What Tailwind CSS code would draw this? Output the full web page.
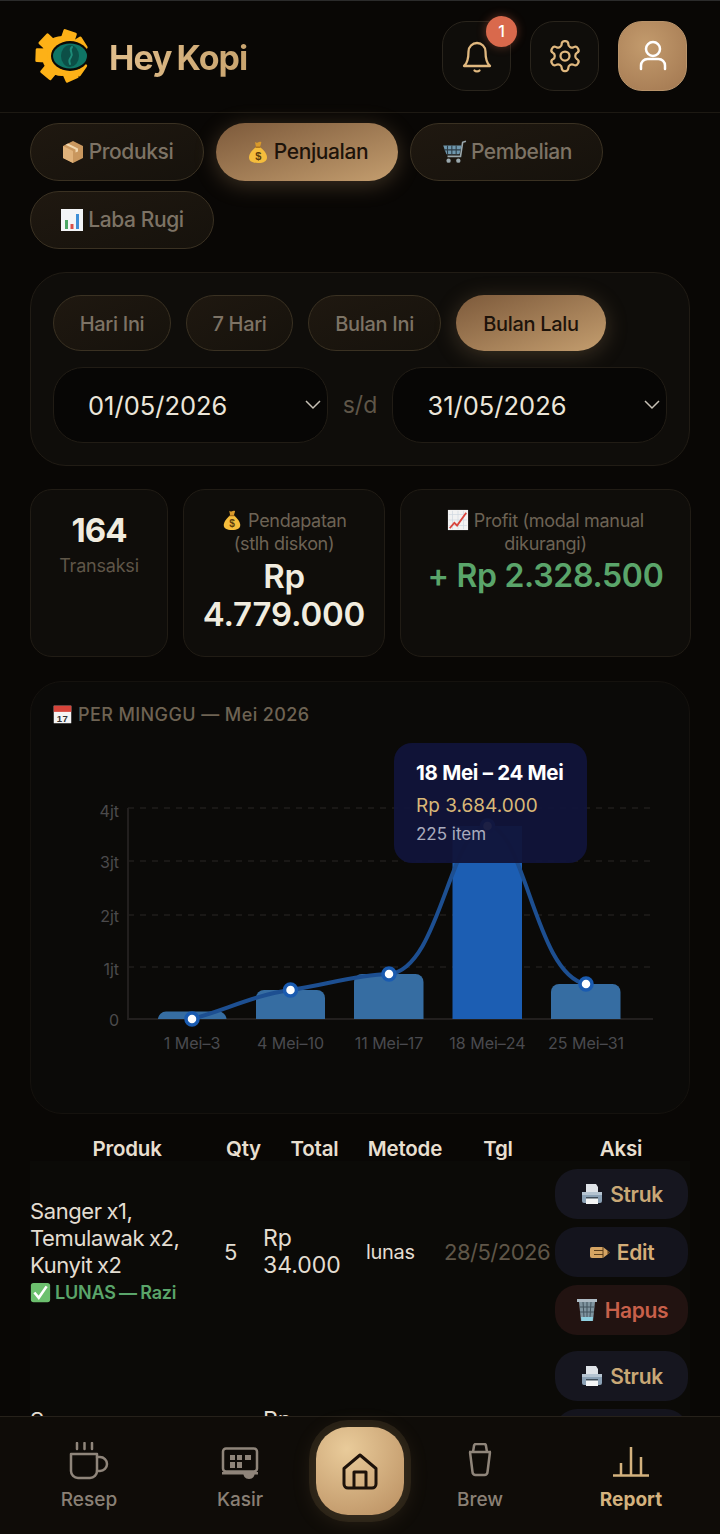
<!DOCTYPE html>
<html lang="en">
<head>
    <meta charset="UTF-8">
    <meta name="viewport" content="width=device-width, initial-scale=1.0">
    <title>Hey Kopi - Report</title>
    <script src="https://cdn.jsdelivr.net/npm/@tailwindcss/browser@4"></script>
</head>
<body class="bg-[#090705]">
    <svg class="hidden">
        <symbol id="bag" viewBox="0 0 24 24">
            <path d="M9 2c1 1 2 1 3 .4 1-.6 2.600-.8 3.400 0L14 7h-4z" fill="#d99a2b"/>
            <path d="M10 7h4c4 3 7 7 7 10.500C21 21 18 23 12 23S3 21 3 17.500C3 14 6 10 10 7z" fill="#f5bd3c"/>
            <path d="M9.500 6.500h5v1.400h-5z" fill="#a86f1c"/>
            <text x="12" y="20" text-anchor="middle" font-size="11" font-weight="700" fill="#5b3c0c" font-family="Liberation Sans, sans-serif">$</text>
        </symbol>
        <symbol id="printer" viewBox="0 0 24 24">
            <path d="M6 2h10l2 3v5H6z" fill="#dfe3e8"/>
            <path d="M2 10h20v9a2 2 0 0 1-2 2H4a2 2 0 0 1-2-2z" fill="#8ba1b5"/>
            <path d="M2 10h20v3H2z" fill="#b5c4d1"/>
            <path d="M6 16h12v6H6z" fill="#f4f5f6"/>
            <path d="M6 15h12v1.500H6z" fill="#3e4c59"/>
        </symbol>
    </svg>

    <div class="relative w-[720px] h-[1534px] overflow-hidden font-['Inter',sans-serif] border-t border-[#2b2b2b]">

        <div class="h-[1415px] overflow-hidden">
        <!-- header -->
        <header class="flex items-center justify-between h-[112px] pb-[2px] pl-[35px] pr-[33px] border-b border-[#1d1913] bg-[#090705]">
            <div class="flex items-center gap-[21px]">
                <svg class="w-[53px] h-[56px] overflow-visible" viewBox="0 0 53 56">
                    <g fill="#fdb117">
                        <circle cx="27" cy="28" r="20"/>
                        <rect x="20" y="1.500" width="14" height="12" rx="1.500" transform="rotate(19 27 28)"/>
                        <rect x="20" y="1.500" width="14" height="12" rx="1.500" transform="rotate(-47 27 28)"/>
                        <rect x="20" y="1.500" width="14" height="12" rx="1.500" transform="rotate(-88 27 28)"/>
                        <rect x="20" y="1.500" width="14" height="12" rx="1.500" transform="rotate(-140 27 28)"/>
                        <rect x="20" y="1.500" width="14" height="12" rx="1.500" transform="rotate(156 27 28)"/>
                        <rect x="20" y="1.500" width="14" height="12" rx="1.500" transform="rotate(125 27 28)"/>
                        <rect x="20" y="1.500" width="14" height="12" rx="1.500" transform="rotate(58 27 28)"/>
                    </g>
                    <ellipse cx="35" cy="28" rx="19" ry="15" fill="#0b0a07"/>
                    <ellipse cx="35" cy="28" rx="17" ry="12.500" fill="#0f7565"/>
                    <ellipse cx="35" cy="28" rx="9" ry="11" fill="#0c4f47"/>
                    <path d="M37 19c-4 4 2 6-1 10-2 3-2 4-1 7" fill="none" stroke="#1d8b78" stroke-width="2" stroke-linecap="round"/>
                </svg>
                <h1 class="pt-[3px] text-[34px] font-bold tracking-[-1px] [word-spacing:-2px] bg-gradient-to-r from-[#e0bd8b] to-[#c9a46f] bg-clip-text text-transparent">Hey Kopi</h1>
            </div>
            <div class="flex items-center gap-[19px]">
                <button class="relative flex items-center justify-center w-[69px] h-[70px] rounded-[24px] bg-[#0f0d0a] border border-[#29241c]">
                    <svg class="w-[36px] h-[36px]" viewBox="0 0 36 36" fill="none" stroke="#e0b87f" stroke-width="2.300" stroke-linecap="round" stroke-linejoin="round">
                        <path d="M9.500 13.500a8.500 8.500 0 0 1 17 0c0 9 2 12.500 4.500 14.500H5c2.500-2 4.500-5.500 4.500-14.500z"/>
                        <path d="M15.500 32.500c1.200 1.200 3.800 1.200 5 0"/>
                    </svg>
                    <span class="absolute -top-[6px] -right-[7px] flex items-center justify-center w-[31px] h-[31px] rounded-full bg-[#d9694c] text-white text-[16px] font-medium shadow-[0_0_10px_rgba(217,105,76,.4)]">1</span>
                </button>
                <button class="flex items-center justify-center w-[69px] h-[70px] rounded-[24px] bg-[#0f0d0a] border border-[#29241c]">
                    <svg class="w-[36px] h-[36px]" viewBox="0 0 24 24" fill="none" stroke="#e0b87f" stroke-width="1.500" stroke-linecap="round" stroke-linejoin="round">
                        <path d="M12.220 2h-.44a2 2 0 0 0-2 2v.18a2 2 0 0 1-1 1.730l-.43.25a2 2 0 0 1-2 0l-.15-.08a2 2 0 0 0-2.730.73l-.22.38a2 2 0 0 0 .73 2.730l.15.1a2 2 0 0 1 1 1.720v.51a2 2 0 0 1-1 1.740l-.15.09a2 2 0 0 0-.73 2.730l.22.38a2 2 0 0 0 2.730.73l.15-.08a2 2 0 0 1 2 0l.43.25a2 2 0 0 1 1 1.730V20a2 2 0 0 0 2 2h.44a2 2 0 0 0 2-2v-.18a2 2 0 0 1 1-1.730l.43-.25a2 2 0 0 1 2 0l.15.08a2 2 0 0 0 2.730-.73l.22-.39a2 2 0 0 0-.73-2.730l-.15-.08a2 2 0 0 1-1-1.740v-.5a2 2 0 0 1 1-1.740l.15-.09a2 2 0 0 0 .73-2.730l-.22-.38a2 2 0 0 0-2.730-.73l-.15.08a2 2 0 0 1-2 0l-.43-.25a2 2 0 0 1-1-1.730V4a2 2 0 0 0-2-2z"/>
                        <circle cx="12" cy="12" r="3"/>
                    </svg>
                </button>
                <button class="flex items-center justify-center w-[69px] h-[70px] rounded-[24px] bg-[radial-gradient(circle_at_40%_35%,#c39b6d,#a27750)] border border-[#b8936a]">
                    <svg class="w-[36px] h-[36px]" viewBox="0 0 36 36" fill="none" stroke="#fff" stroke-width="2.500" stroke-linecap="round">
                        <circle cx="18" cy="11" r="7"/>
                        <path d="M6 31v-3.500a6.500 6.500 0 0 1 6.500-6.500h11a6.500 6.500 0 0 1 6.500 6.500V31"/>
                    </svg>
                </button>
            </div>
        </header>

        <main class="px-[30px]">
            <!-- section tabs -->
            <nav class="flex flex-wrap gap-x-[12px] gap-y-[10px] pt-[10px] text-[21px] font-medium tracking-[-0.400px] [word-spacing:-1px]">
                <button class="flex items-center justify-center gap-[4px] w-[174px] h-[58px] rounded-full bg-gradient-to-br from-[#1f1810] to-[#16120c] border border-[#3a3122] text-[#7d7365]">
                    <svg class="w-[24px] h-[24px]" viewBox="0 0 24 24"><path d="M12 1l10 5v12l-10 5-10-5V6z" fill="#c9975e"/><path d="M12 11v12l-10-5V6z" fill="#e0b27a"/><path d="M7 3.500l10 5v3l-2.500 1v-3L4.500 4.800z" fill="#f0d6ad"/></svg>
                    Produksi
                </button>
                <button class="flex items-center justify-center gap-[4px] w-[182px] h-[58px] rounded-full bg-gradient-to-br from-[#7d5a3b] to-[#c49e6f] text-[#1d130a] shadow-[0_4px_22px_rgba(196,158,111,.28)]">
                    <svg class="w-[24px] h-[24px]"><use href="#bag"/></svg>
                    Penjualan
                </button>
                <button class="flex items-center justify-center gap-[4px] w-[193px] h-[58px] rounded-full bg-gradient-to-br from-[#1f1810] to-[#16120c] border border-[#3a3122] text-[#7d7365]">
                    <svg class="w-[26px] h-[26px]" viewBox="0 0 24 24"><path d="M23 2l-3 1-2 13H6" fill="none" stroke="#9aa8ad" stroke-width="1.500"/><path d="M2 6h17l-2 8H5z" fill="#6f97ad"/><path d="M6 6v8M10 6v8M14 6v8M3 10h15" stroke="#2c3d47"/><circle cx="7" cy="20" r="2" fill="#9aa8ad"/><circle cx="16" cy="20" r="2" fill="#9aa8ad"/></svg>
                    Pembelian
                </button>
                <button class="flex items-center justify-center gap-[4px] w-[184px] h-[58px] rounded-full bg-gradient-to-br from-[#1f1810] to-[#16120c] border border-[#3a3122] text-[#7d7365]">
                    <svg class="w-[24px] h-[24px]" viewBox="0 0 24 24"><path d="M1 1h22v22H1z" fill="#f3f5f7"/><path d="M5 12h3v9H5z" fill="#4aa564"/><path d="M10.500 16h3v5h-3z" fill="#d9504a"/><path d="M16 6h3v15h-3z" fill="#3f8fd6"/></svg>
                    Laba Rugi
                </button>
            </nav>

            <!-- filter card -->
            <section class="mt-[23px] h-[194px] px-[22px] pt-[22px] rounded-[36px] bg-[#0f0d0a] border border-[#211c15]">
                <div class="flex gap-[15px] text-[20px] font-medium tracking-[-0.300px] [word-spacing:-1px]">
                    <button class="w-[118px] h-[56px] pt-[1px] rounded-full bg-gradient-to-br from-[#1f1810] to-[#16120c] border border-[#3a3122] text-[#7d7365]">Hari Ini</button>
                    <button class="w-[107px] h-[56px] pt-[1px] rounded-full bg-gradient-to-br from-[#1f1810] to-[#16120c] border border-[#3a3122] text-[#7d7365]">7 Hari</button>
                    <button class="w-[133px] h-[56px] pt-[1px] rounded-full bg-gradient-to-br from-[#1f1810] to-[#16120c] border border-[#3a3122] text-[#7d7365]">Bulan Ini</button>
                    <button class="w-[150px] h-[56px] pt-[1px] rounded-full bg-gradient-to-br from-[#7d5a3b] to-[#c49e6f] text-[#1d130a] shadow-[0_4px_22px_rgba(196,158,111,.25)]">Bulan Lalu</button>
                </div>
                <div class="flex items-center mt-[16px]">
                    <div class="flex items-center justify-between w-[275px] h-[76px] pl-[34px] pr-[6px] rounded-[30px] bg-[#070605] border border-[#211c15] text-[25.500px] text-[#ebe5d9]">
                        <span class="pt-[2px]">01/05/2026</span>
                        <svg class="w-[16px] h-[10px]" viewBox="0 0 16 10" fill="none" stroke="#c7c1b6" stroke-width="1.500"><path d="M1 1l7 7 7-7"/></svg>
                    </div>
                    <span class="w-[65px] text-center text-[23px] text-[#5f5648]">s/d</span>
                    <div class="flex items-center justify-between w-[275px] h-[76px] pl-[34px] pr-[6px] rounded-[30px] bg-[#070605] border border-[#211c15] text-[25.500px] text-[#ebe5d9]">
                        <span class="pt-[2px]">31/05/2026</span>
                        <svg class="w-[16px] h-[10px]" viewBox="0 0 16 10" fill="none" stroke="#c7c1b6" stroke-width="1.500"><path d="M1 1l7 7 7-7"/></svg>
                    </div>
                </div>
            </section>

            <!-- stats -->
            <section class="grid grid-cols-[138px_202px_291px] gap-x-[15px] mt-[23px] h-[168px] text-center">
                <div class="pt-[20px] rounded-[22px] bg-[#0f0d0a] border border-[#211c15]">
                    <div class="text-[33px] leading-[40px] font-bold text-[#f1ecdf] tracking-[-1px]">164</div>
                    <div class="mt-[4px] text-[18px] leading-[24px] text-[#5f5648] tracking-[-0.200px]">Transaksi</div>
                </div>
                <div class="pt-[19px] rounded-[22px] bg-[#0f0d0a] border border-[#211c15]">
                    <div class="text-[18px] leading-[23px] text-[#6d6355] tracking-[-0.300px]">
                        <svg class="inline-block w-[22px] h-[22px] align-[-4px]"><use href="#bag"/></svg> Pendapatan<br>(stlh diskon)
                    </div>
                    <div class="mt-[2px] text-[33px] leading-[38px] font-semibold text-[#f1ecdf] tracking-[-0.200px]">Rp<br>4.779.000</div>
                </div>
                <div class="pt-[19px] rounded-[22px] bg-[#0f0d0a] border border-[#211c15]">
                    <div class="px-[20px] text-[18px] leading-[23px] text-[#6d6355] tracking-[-0.300px]">
                        <svg class="inline-block w-[22px] h-[22px] align-[-4px]" viewBox="0 0 24 24"><path d="M1 1h22v22H1z" fill="#f2f2f2"/><path d="M2 6h20M2 12h20M2 18h20M6 2v20M12 2v20M18 2v20" stroke="#cdd6e0" stroke-width=".7"/><path d="M3 21l5-6 3 3L21 4" fill="none" stroke="#d9443c" stroke-width="2"/></svg> Profit (modal manual dikurangi)
                    </div>
                    <div class="mt-[2px] text-[32px] leading-[38px] font-semibold text-[#5aa56a] tracking-[-0.300px]">+ Rp 2.328.500</div>
                </div>
            </section>

            <!-- weekly chart -->
            <section class="relative mt-[24px] h-[433px] rounded-[32px] bg-[#0b0a08] border border-[#15120e]">
                <h2 class="absolute left-[21px] top-[19px] flex items-center gap-[5px] text-[18px] font-medium tracking-[0.400px] text-[#6e6353]">
                    <svg class="w-[21px] h-[21px]" viewBox="0 0 24 24"><path d="M2 2h20v20H2z" fill="#f4f4f4"/><path d="M2 2h20v7H2z" fill="#d8443a"/><text x="12" y="20" text-anchor="middle" font-size="11" font-weight="700" fill="#333" font-family="Liberation Sans, sans-serif">17</text></svg>
                    PER MINGGU — Mei 2026
                </h2>
                <svg class="absolute left-[-1px] top-[-1px]" width="660" height="432" viewBox="30 681 660 432" font-family="Inter, sans-serif">
                    <g stroke="#2a2725" stroke-dasharray="6 6">
                        <path d="M128 808H653M128 861H653M128 915H653M128 967H653"/>
                    </g>
                    <path d="M128 808V1019H653" fill="none" stroke="#221f1e" stroke-width="2"/>
                    <g font-size="16" fill="#4b4a4c" text-anchor="end">
                        <text x="119" y="817">4jt</text>
                        <text x="119" y="868">3jt</text>
                        <text x="119" y="922">2jt</text>
                        <text x="119" y="975">1jt</text>
                        <text x="119" y="1026">0</text>
                    </g>
                    <path d="M158 1019a8 8 0 0 1 8-7.500h52.500a8 8 0 0 1 8 7.500z" fill="#366da2"/>
                    <path d="M256 1019v-21a8 8 0 0 1 8-8h53a8 8 0 0 1 8 8v21z" fill="#366da2"/>
                    <path d="M354 1019v-37a8 8 0 0 1 8-8h53.500a8 8 0 0 1 8 8v37z" fill="#366da2"/>
                    <path d="M452.500 1019V826H522V1019z" fill="#1c5eb3"/>
                    <path d="M551 1019v-27a8 8 0 0 1 8-8h53.500a8 8 0 0 1 8 8v27z" fill="#366da2"/>
                    <path d="M192 1019C225 1010 255 995 290.500 990 325 985 355 975 389 974 440 970 450 826 487.500 826 525 826 535 975 586 984" fill="none" stroke="#1d4f91" stroke-width="4"/>
                    <g fill="#fff" stroke="#1a5bb0" stroke-width="3.500">
                        <circle cx="192" cy="1019" r="6"/>
                        <circle cx="290.500" cy="990" r="6"/>
                        <circle cx="389" cy="974" r="6"/>
                        <circle cx="487.500" cy="826" r="6"/>
                        <circle cx="586" cy="984" r="6"/>
                    </g>
                    <g font-size="16" fill="#4a4a4f" text-anchor="middle">
                        <text x="192" y="1049">1 Mei–3</text>
                        <text x="290.500" y="1049">4 Mei–10</text>
                        <text x="389" y="1049">11 Mei–17</text>
                        <text x="487.500" y="1049">18 Mei–24</text>
                        <text x="586" y="1049">25 Mei–31</text>
                    </g>
                </svg>
                <!-- tooltip over the active bar -->
                <div class="absolute left-[363px] top-[61px] w-[193px] h-[120px] pl-[22px] pt-[17px] rounded-[18px] bg-[#11143a]/95">
                    <div class="text-[20.500px] leading-[26px] font-bold text-white tracking-[-0.300px]">18 Mei – 24 Mei</div>
                    <div class="mt-[7px] text-[19px] leading-[26px] text-[#d9b878]">Rp 3.684.000</div>
                    <div class="mt-[2px] text-[17px] leading-[26px] text-[#a9abbd]">225 item</div>
                </div>
            </section>

            <!-- sales table -->
            <table class="mt-[22px] w-[660px] table-fixed border-collapse">
                <colgroup>
                    <col class="w-[194px]"><col class="w-[39px]"><col class="w-[103px]"><col class="w-[78px]"><col class="w-[108px]"><col class="w-[138px]">
                </colgroup>
                <thead>
                    <tr class="h-[25px] text-[20.500px] leading-[25px] font-semibold text-[#e8dfd0] tracking-[-0.200px]">
                        <th class="font-semibold">Produk</th>
                        <th class="font-semibold">Qty</th>
                        <th class="font-semibold">Total</th>
                        <th class="font-semibold">Metode</th>
                        <th class="font-semibold">Tgl</th>
                        <th class="font-semibold">Aksi</th>
                    </tr>
                </thead>
                <tbody class="bg-[#0b0a07] text-[22px] leading-[27px] text-[#e3ddd1]">
                    <tr>
                        <td class="align-middle tracking-[-0.400px] [word-spacing:-1px]">
                            Sanger x1, Temulawak x2, Kunyit x2
                            <div class="flex items-center gap-[4px] text-[18px] leading-[28px] font-semibold text-[#5aa56a] tracking-[-0.200px]">
                                <svg class="w-[21px] h-[21px]" viewBox="0 0 24 24"><rect x="1" y="1" width="22" height="22" rx="3" fill="#6cc06e"/><path d="M5 12l5 6 9-13" fill="none" stroke="#fff" stroke-width="3"/></svg>
                                LUNAS — Razi
                            </div>
                        </td>
                        <td class="align-middle">5</td>
                        <td class="align-middle text-[23px]">Rp 34.000</td>
                        <td class="align-middle text-[20px] tracking-[-0.300px]">lunas</td>
                        <td class="align-middle whitespace-nowrap text-[22px] text-[#5f5648] tracking-[-0.500px]">28/5/2026</td>
                        <td class="py-[8px] pl-[3px]">
                            <div class="flex flex-col gap-[8px] w-[133px] text-[21px] font-semibold tracking-[-0.300px]">
                                <button class="flex items-center justify-center gap-[6px] h-[50px] rounded-[22px] bg-[#16161f] text-[#c9a876]">
                                    <svg class="w-[24px] h-[24px]"><use href="#printer"/></svg>Struk
                                </button>
                                <button class="flex items-center justify-center gap-[6px] h-[50px] rounded-[22px] bg-[#14141d] text-[#d4ad78]">
                                    <svg class="w-[22px] h-[13px]" viewBox="0 0 22 13"><path d="M1 3a2 2 0 0 1 2-2h11l7 5.500-7 5.500H3a2 2 0 0 1-2-2z" fill="#d5a463"/><path d="M5 4.500h9M5 8.500h9M14 1v11" stroke="#5a3e1c" stroke-width="1"/><path d="M18.500 4.500l2.500 2-2.500 2z" fill="#5a3e1c"/></svg>Edit
                                </button>
                                <button class="flex items-center justify-center gap-[6px] h-[50px] rounded-[22px] bg-[#221311] text-[#c8604a]">
                                    <svg class="w-[24px] h-[26px]" viewBox="0 0 24 26"><path d="M2 2h20v3H2z" fill="#aebbc4"/><path d="M4 5h16l-2 19H6z" fill="#7f949f"/><path d="M6 20h12l-.5 4h-11z" fill="#8fd0e0"/><path d="M8 5l1 15M12 5v15M16 5l-1 15M5 10h14M5 15h14" stroke="#44555f"/></svg>Hapus
                                </button>
                            </div>
                        </td>
                    </tr>
                    <tr>
                        <td class="align-middle tracking-[-0.400px]">
                            Sanger
                            <div class="flex items-center gap-[4px] text-[18px] leading-[28px] font-semibold text-[#5aa56a] tracking-[-0.200px]">LUNAS — Razi</div>
                        </td>
                        <td class="align-middle">3</td>
                        <td class="align-middle text-[23px]">Rp 21.000</td>
                        <td class="align-middle text-[20px] tracking-[-0.300px]">lunas</td>
                        <td class="align-middle whitespace-nowrap text-[22px] text-[#5f5648] tracking-[-0.500px]">28/5/2026</td>
                        <td class="py-[8px] pl-[3px]">
                            <div class="flex flex-col gap-[8px] w-[133px] text-[21px] font-semibold tracking-[-0.300px]">
                                <button class="flex items-center justify-center gap-[6px] h-[50px] rounded-[22px] bg-[#16161f] text-[#c9a876]">
                                    <svg class="w-[24px] h-[24px]"><use href="#printer"/></svg>Struk
                                </button>
                                <button class="flex items-center justify-center gap-[6px] h-[50px] rounded-[22px] bg-[#14141d] text-[#d4ad78]">Edit</button>
                                <button class="flex items-center justify-center gap-[6px] h-[50px] rounded-[22px] bg-[#221311] text-[#c8604a]">Hapus</button>
                            </div>
                        </td>
                    </tr>
                </tbody>
            </table>
        </main>
        </div>

        <!-- bottom nav sits over the scrolling content -->
        <nav class="absolute left-0 right-0 bottom-0 grid grid-cols-[178px_124px_116px_124px_178px] h-[118px] bg-[#0f0c08] border-t border-[#26211a] text-[19px] font-medium text-[#8a8075]">
            <a class="flex flex-col items-center">
                <svg class="mt-[25px] w-[40px] h-[38px]" viewBox="0 0 40 38" fill="none" stroke="#8f857a" stroke-width="2.500" stroke-linecap="round" stroke-linejoin="round">
                    <path d="M8 1v6M15.500 1v6M23 1v6"/>
                    <path d="M2 12h26v17a7 7 0 0 1-7 7H9a7 7 0 0 1-7-7z"/>
                    <path d="M28 15h3a7 7 0 0 1 0 14h-3"/>
                </svg>
                <span class="mt-[6px]">Resep</span>
            </a>
            <a class="flex flex-col items-center">
                <svg class="mt-[30px] w-[38px] h-[33px]" viewBox="0 0 38 33" fill="#8f857a" stroke="none">
                    <path d="M5 1.500h28a3 3 0 0 1 3 3v17a3 3 0 0 1-3 3H5a3 3 0 0 1-3-3v-17a3 3 0 0 1 3-3z" fill="none" stroke="#8f857a" stroke-width="2.500"/>
                    <path d="M9 8h5v5H9zM16 8h5v5h-5zM24 8h6v5h-6zM9 15h5v6H9zM16 15h5v6h-5z"/>
                    <path d="M1 25h36v2.500H1z"/>
                    <path d="M22 24h12c0 5-2 8-6 8s-6-3-6-8z"/>
                </svg>
                <span class="mt-[6px]">Kasir</span>
            </a>
            <div class="flex justify-center">
                <button class="flex items-center justify-center mt-[10px] w-[88px] h-[88px] rounded-[32px] bg-[radial-gradient(circle_at_35%_25%,#e9cb9a,#b98e60)] shadow-[0_0_0_7px_rgba(120,98,66,.2),0_4px_24px_rgba(200,160,110,.18)]">
                    <svg class="w-[36px] h-[37px]" viewBox="0 0 36 37" fill="none" stroke="#1d120a" stroke-width="3" stroke-linejoin="round">
                        <path d="M2 15.500 18 2l16 13.500V31a4 4 0 0 1-4 4H6a4 4 0 0 1-4-4z"/>
                        <path d="M12 35V19h12v16"/>
                    </svg>
                </button>
            </div>
            <a class="flex flex-col items-center">
                <svg class="mt-[26px] w-[26px] h-[34px]" viewBox="0 0 26 34" fill="none" stroke="#8f857a" stroke-width="2.500" stroke-linejoin="round">
                    <path d="M6 9l1-6a2 2 0 0 1 2-2h8a2 2 0 0 1 2 2l1 6"/>
                    <path d="M2 9h22M3 9l2.500 20a3 3 0 0 0 3 3h9a3 3 0 0 0 3-3L23 9"/>
                </svg>
                <span class="mt-[9px]">Brew</span>
            </a>
            <a class="flex flex-col items-center">
                <svg class="mt-[30px] w-[38px] h-[30px]" viewBox="0 0 38 30" fill="none" stroke="#d4b27e" stroke-width="2.500">
                    <path d="M1 28.500h36M9 28V16M19 28V0M29 28V10"/>
                </svg>
                <span class="mt-[9px] font-bold text-[#d4b27e]">Report</span>
            </a>
        </nav>
    </div>
</body>
</html>
